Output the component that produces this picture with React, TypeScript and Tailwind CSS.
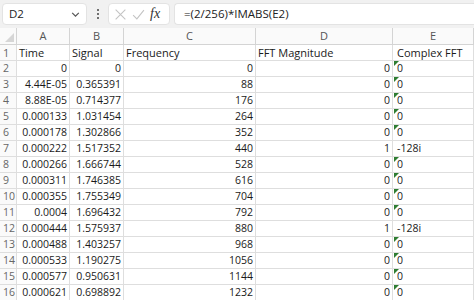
import React from 'react';

// Rows 2..16 of the sheet: [time, signal, frequency, magnitude, complex]
const rows: [string, string, string, string, string][] = [
    ['0', '0', '0', '0', '0'],
    ['4.44E-05', '0.365391', '88', '0', '0'],
    ['8.88E-05', '0.714377', '176', '0', '0'],
    ['0.000133', '1.031454', '264', '0', '0'],
    ['0.000178', '1.302866', '352', '0', '0'],
    ['0.000222', '1.517352', '440', '1', '-128i'],
    ['0.000266', '1.666744', '528', '0', '0'],
    ['0.000311', '1.746385', '616', '0', '0'],
    ['0.000355', '1.755349', '704', '0', '0'],
    ['0.0004', '1.696432', '792', '0', '0'],
    ['0.000444', '1.575937', '880', '1', '-128i'],
    ['0.000488', '1.403257', '968', '0', '0'],
    ['0.000533', '1.190275', '1056', '0', '0'],
    ['0.000577', '0.950631', '1144', '0', '0'],
    ['0.000621', '0.698892', '1232', '0', '0'],
];

const cols = 'grid grid-cols-[17px_53px_54px_132px_137px_1fr]';
const cell = 'h-[16px] border-r border-b border-[#dedede] px-[2px] leading-[15px] whitespace-nowrap overflow-hidden';
const num = cell + ' text-right text-[10.5px]';
const rowHead = 'h-[16px] border-r border-b border-[#dedede] bg-[#fafafa] pl-[3px] leading-[15px] text-[#666]';

const FormulaBar: React.FC = () => (
    <div className="h-[28px] bg-[#f1f1f1] flex items-center pl-[2px] gap-[4px]">
        <div className="w-[85px] h-[22px] bg-white rounded-[4px] border border-[#e3e3e3] flex items-center justify-between pl-[6px] pr-[5px] text-[11.5px]">
            <span className="text-[#222]">D2</span>
            <svg width="11" height="11" viewBox="0 0 10 10" className="text-[#555]">
                <path d="M2 3.5 L5 6.5 L8 3.5" fill="none" stroke="currentColor" strokeWidth="1.1" />
            </svg>
        </div>
        <div className="w-[13px] flex flex-col items-center gap-[2px]">
            <span className="w-[2px] h-[2px] rounded-full bg-[#444]" />
            <span className="w-[2px] h-[2px] rounded-full bg-[#444]" />
            <span className="w-[2px] h-[2px] rounded-full bg-[#444]" />
        </div>
        <div className="w-[62px] h-[22px] bg-white rounded-[4px] border border-[#e3e3e3] flex items-center pl-[5px] gap-[5px]">
            <svg width="13" height="13" viewBox="0 0 12 12" className="text-[#c4c4c4]">
                <path d="M1.5 1.5 L10.5 10.5 M10.5 1.5 L1.5 10.5" stroke="currentColor" strokeWidth="1" />
            </svg>
            <svg width="13" height="13" viewBox="0 0 12 12" className="text-[#c4c4c4]">
                <path d="M1 6.5 L4.5 10 L11 2" fill="none" stroke="currentColor" strokeWidth="1" />
            </svg>
            <span className="italic text-[#333] text-[14px] leading-none font-['Liberation_Serif',serif]">fx</span>
        </div>
        <div className="flex-1 h-[22px] bg-white rounded-l-[4px] border border-r-0 border-[#e3e3e3] flex items-center pl-[9px] text-[11.5px] text-[#222]">
            =(2/256)*IMABS(E2)
        </div>
    </div>
);

export default function App() {
    return (
        <div className="w-[474px] h-[300px] overflow-hidden bg-white font-['Open_Sans',sans-serif] text-[11px] text-[#1a1a1a]">
            <FormulaBar />
            <div className={cols}>
                {/* column headers */}
                <div className="h-[17px] border-r border-b border-[#d4d4d4] bg-[#fafafa] relative">
                    <svg width="9" height="9" viewBox="0 0 9 9" className="absolute right-[2px] bottom-[2px]">
                        <path d="M9 0 L9 9 L0 9 Z" fill="#d6d6d6" />
                    </svg>
                </div>
                {['A', 'B', 'C', 'D', 'E'].map(c => (
                    <div key={c} className="h-[17px] border-r border-b border-[#d4d4d4] bg-[#fafafa] text-center leading-[16px] text-[#555]">
                        {c}
                    </div>
                ))}

                {/* header row */}
                <div className={rowHead}>1</div>
                <div className={cell}>Time</div>
                <div className={cell}>Signal</div>
                <div className={cell}>Frequency</div>
                <div className={cell}>FFT Magnitude</div>
                <div className={cell + ' pl-[4px]'}>Complex FFT</div>

                {rows.map((r, i) => (
                    <React.Fragment key={i}>
                        <div className={rowHead + ' text-[10.5px]'}>{i + 2}</div>
                        <div className={num}>{r[0]}</div>
                        <div className={num}>{r[1]}</div>
                        <div className={num}>{r[2]}</div>
                        <div className={num}>{r[3]}</div>
                        <div className={cell + ' pl-[4px] relative text-[10.5px]'}>
                            {r[4] === '0' && (
                                <svg width="5" height="5" viewBox="0 0 5 5" className="absolute left-[1px] top-0">
                                    <path d="M0 0 L5 0 L0 5 Z" fill="#2e7d32" />
                                </svg>
                            )}
                            {r[4]}
                        </div>
                    </React.Fragment>
                ))}
            </div>
        </div>
    );
}
